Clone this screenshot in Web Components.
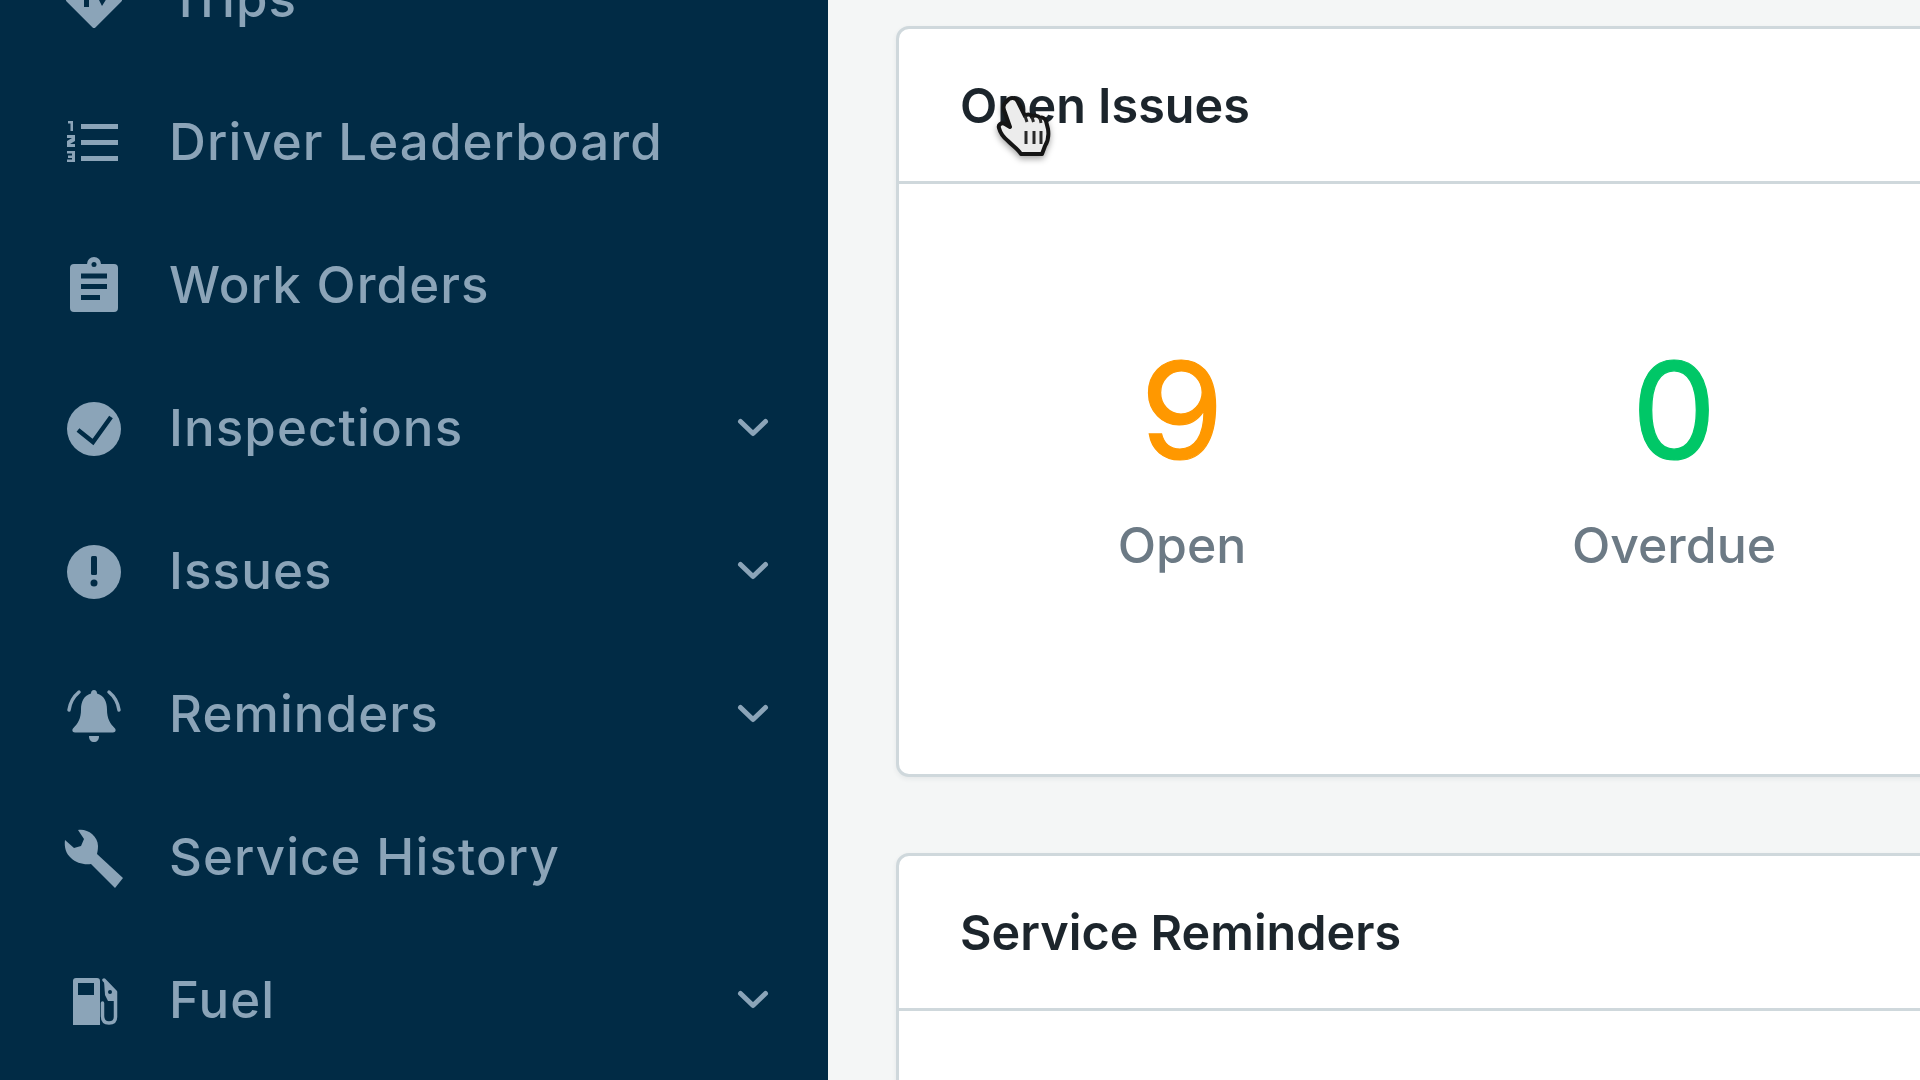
<!DOCTYPE html>
<html><head><meta charset="utf-8"><title>Fleet dashboard</title>
<style>
html,body{margin:0;height:1080px;overflow:hidden;background:#f4f6f6}
</style></head>
<body>
<template id="t-nav-item"><style>
:host{display:flex;align-items:center;height:142.9px;padding-left:67px;padding-right:59px;box-sizing:border-box;color:#8ba4b8;font:450 51px Inter,"Liberation Sans",sans-serif;letter-spacing:1.1px}
.ic{flex:none;width:54px;height:60px;margin-right:48px;display:block}
.ic ::slotted(svg){display:block;width:60px;height:60px;margin:1px 0 0 -3px}
.lb{flex:1;white-space:nowrap;padding-bottom:1px}
.ch{flex:none;width:32px;height:20px;display:none}
:host([expand]) .ch{display:block}
</style><span class="ic"><slot name="icon"></slot></span><span class="lb"><slot></slot></span>
<svg class="ch" viewBox="0 0 32 20" fill="none" stroke="#8ba4b8" stroke-width="5" stroke-linecap="round" stroke-linejoin="round"><path d="M3.500 3.500 16 15.500 28.500 3.500"/></svg></template>

<template id="t-side-nav"><style>
:host{display:block;flex:none;width:828px;height:1080px;background:#012b45;overflow:hidden}
.list{display:flex;flex-direction:column;margin-top:-72px}
</style><div class="list"><slot></slot></div></template>

<template id="t-card"><style>
:host{display:block;flex:none;width:1100px;background:#fff;border:3.500px solid #cfd8dc;border-radius:13px;box-sizing:border-box;box-shadow:0 2px 5px rgba(40,60,70,.07)}
header{height:155px;box-sizing:border-box;border-bottom:3.500px solid #cfd8dc;padding:1px 0 0 61px;display:flex;align-items:center;font:600 48.500px Inter,"Liberation Sans",sans-serif;color:#1c252c;white-space:nowrap}
.body{display:block}
</style><header><slot name="title"></slot></header><div class="body"><slot></slot></div></template>

<template id="t-stat-pair"><style>
:host{display:grid;grid-template-columns:492px 492px;padding:0 0 0 37px;height:590px;box-sizing:border-box}
</style><slot></slot></template>

<template id="t-stat"><style>
:host{display:flex;flex-direction:column;align-items:center;padding-top:159px;box-sizing:border-box;text-align:center}
.n{font:400 134px/1 Inter,"Liberation Sans",sans-serif;color:var(--c);-webkit-text-stroke:1.2px var(--c)}
.l{font:500 50px/1 Inter,"Liberation Sans",sans-serif;color:#6c7a85;margin-top:43px}
</style><div class="n"><slot name="n"></slot></div><div class="l"><slot name="l"></slot></div></template>

<template id="t-hand-cursor"><style>
:host{position:absolute;left:994px;top:92px;width:70px;height:72px;display:block;filter:blur(.6px) drop-shadow(0 3px 3px rgba(0,0,0,.35))}
svg{display:block}
</style><svg width="70" height="72" viewBox="0 0 70 72"><path d="M13 9c3-4 9-4 11 1l7 14c2-2 6-2 7 1 2-2 6-2 8 1 2-1 5 0 6 3l2 8c1 6 0 12-3 17l-3 8H27c-3-5-8-8-13-13-5-4-8-9-9-13-1-3 2-6 6-4l5 3-6-17c-1-3 0-7 3-9Z" fill="#ececec" stroke="#151515" stroke-width="4" stroke-linejoin="round"/><path d="M32 39v13M40 39v13M47 39v13M31 24l2 6M38 25l1.500 5M46 26l1 5" stroke="#2a2a2a" stroke-width="3" fill="none"/></svg></template>

<template id="t-main-area"><style>
:host{display:flex;flex-direction:column;flex:1;min-width:0;gap:75.5px;padding:26px 0 0 68px;box-sizing:border-box;height:1080px;overflow:hidden;background:#f4f6f6}
</style><slot></slot></template>

<template id="t-app-shell"><style>
:host{display:flex;width:1920px;height:1080px;overflow:hidden;position:relative;filter:blur(.7px)}
</style><slot></slot></template>

<app-shell>
<side-nav>
<nav-item><svg slot="icon" viewBox="0 0 60 60"><path fill="#8ba4b8" stroke="#8ba4b8" stroke-width="4" stroke-linejoin="round" d="M30 4 56 30 30 56 4 30Z"/><path fill="#012b45" d="M20 19h5v18h-5zM25 19h12v6H25zM34 28h9l-5 8z"/></svg>Trips</nav-item>
<nav-item><svg slot="icon" viewBox="0 0 60 60" fill="#8ba4b8"><rect x="17" y="11" width="37" height="5" /><rect x="17" y="27" width="37" height="5"/><rect x="17" y="43" width="37" height="5"/><path d="M4 8h5v10H6.500V10.500H4ZM3 22h8v6l-5 3h5v3H3v-6l5-3H3ZM3 38h8v11H3v-2.500h5V45H4v-2.500h4v-2H3Z"/></svg>Driver Leaderboard</nav-item>
<nav-item><svg slot="icon" viewBox="0 0 60 60"><path fill="#8ba4b8" d="M10 8h13a7 7 0 0 1 14 0h13a4 4 0 0 1 4 4v40a4 4 0 0 1-4 4H10a4 4 0 0 1-4-4V12a4 4 0 0 1 4-4Z"/><circle cx="30" cy="8.500" r="2.500" fill="#012b45"/><path fill="#012b45" d="M17 17.500h26v5H17zM17 28h26v5H17zM17 39h19v5H17z"/></svg>Work Orders</nav-item>
<nav-item expand><svg slot="icon" viewBox="0 0 60 60"><circle cx="30" cy="30" r="27" fill="#8ba4b8"/><path d="M14 31 29 43 47 18" fill="none" stroke="#012b45" stroke-width="4.500"/></svg>Inspections</nav-item>
<nav-item expand><svg slot="icon" viewBox="0 0 60 60"><circle cx="30" cy="30" r="27" fill="#8ba4b8"/><rect x="27" y="14" width="6" height="19" rx="1.500" fill="#012b45"/><circle cx="30" cy="41" r="3.500" fill="#012b45"/></svg>Issues</nav-item>
<nav-item expand><svg slot="icon" viewBox="0 0 60 60" fill="#8ba4b8"><path d="M30 5c2 0 3 1.500 3 3.500 7 2 10 8 10 16 0 9 3 14 8 19 1 1 1 4-2 4H11c-3 0-3-3-2-4 5-5 8-10 8-19 0-8 3-14 10-16 0-2 1-3.500 3-3.500Z"/><path d="M25 51h10c0 4-2 6-5 6s-5-2-5-6Z"/><path d="M5 25c1-7 4-13 10-18M55 25c-1-7-4-13-10-18" fill="none" stroke="#8ba4b8" stroke-width="3.500" stroke-linecap="round"/></svg>Reminders</nav-item>
<nav-item><svg slot="icon" viewBox="0 0 60 60" fill="#8ba4b8"><path d="M14 2C22 0 34 7 34 18 34 21 33.500 24 33 26L59 50 51 60 27 36C20 37 12 35 7 30 2 26 0 19 1 12L10 20 17 18 20 11Z"/></svg>Service History</nav-item>
<nav-item expand><svg slot="icon" viewBox="0 0 60 60" fill="#8ba4b8"><path fill-rule="evenodd" d="M9 10a3 3 0 0 1 3-3h21a3 3 0 0 1 3 3v44H9ZM14 12v12h16V12Z"/><path fill="none" stroke="#8ba4b8" stroke-width="3.500" stroke-linecap="round" stroke-linejoin="round" d="M38.500 32V45C38.500 50 41 52 45 52S51.500 50 51.500 46V21L40 9"/><path d="M40 10 52 21V30H44L41 24Z"/><circle cx="46" cy="21" r="2" fill="#012b45"/></svg>Fuel</nav-item>
</side-nav>
<main-area>
<info-card><span slot="title">Open Issues</span>
<stat-pair>
<stat-item style="--c:#ff9800"><span slot="n">9</span><span slot="l">Open</span></stat-item>
<stat-item style="--c:#00c767"><span slot="n">0</span><span slot="l">Overdue</span></stat-item>
</stat-pair></info-card>
<info-card><span slot="title">Service Reminders</span><div style="height:200px"></div></info-card>
</main-area>
<hand-cursor></hand-cursor>
</app-shell>
<script>
const reg=(name,id)=>customElements.define(name,class extends HTMLElement{constructor(){super();this.attachShadow({mode:'open'}).appendChild(document.getElementById(id).content.cloneNode(true));}});
reg('nav-item','t-nav-item');reg('side-nav','t-side-nav');reg('info-card','t-card');reg('stat-pair','t-stat-pair');reg('stat-item','t-stat');reg('hand-cursor','t-hand-cursor');reg('main-area','t-main-area');reg('app-shell','t-app-shell');
</script>
</body></html>
